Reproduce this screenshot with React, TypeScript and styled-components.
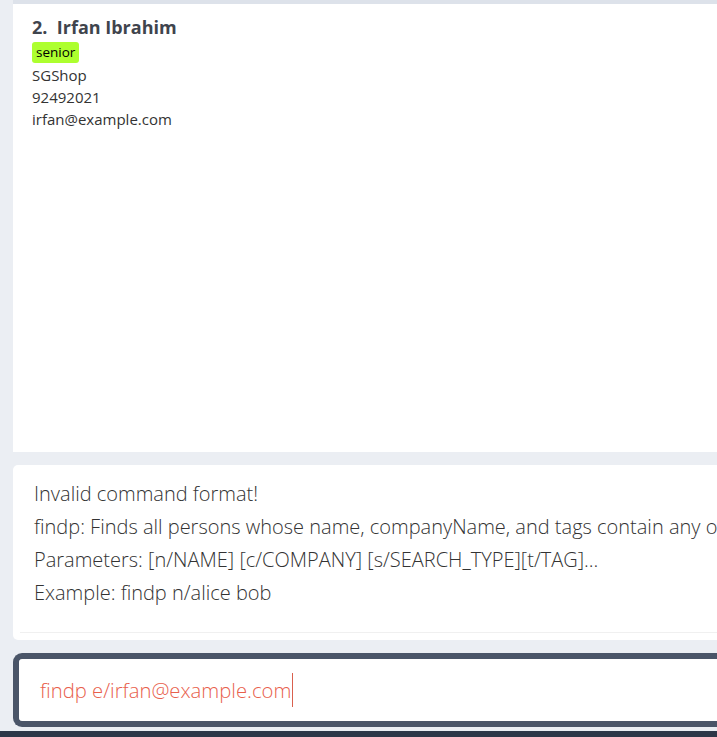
import styled, { createGlobalStyle } from "styled-components";

const GlobalStyle = createGlobalStyle`
  html, body {
    margin: 0;
    padding: 0;
    background: #ebeef3;
    overflow: hidden;
  }
  body {
    font-family: "Open Sans", "Noto Sans", sans-serif;
  }
`;

const Window = styled.div`
  width: 717px;
  height: 737px;
  display: flex;
  flex-direction: column;
  background: #ebeef3;
  overflow: hidden;
`;

const Main = styled.div`
  flex: 1;
  display: flex;
  flex-direction: column;
  gap: 13px;
  padding: 0 0 0 13px;
`;

const ListPanel = styled.div`
  height: 452px;
  border-top: 4px solid #dde2ea;
  background: #ffffff;
  padding: 12px 19px;
  box-sizing: border-box;
`;

const Card = styled.div`
  display: flex;
  flex-direction: column;
`;

const Name = styled.div`
  font-size: 18px;
  font-weight: 700;
  color: #3f444d;
  line-height: 22px;
  white-space: pre;
`;

const Tags = styled.div`
  display: flex;
  gap: 4px;
  margin: 4px 0 1px;
`;

const Tag = styled.span<{ $bg: string }>`
  background: ${(p) => p.$bg};
  color: #000;
  font-size: 13.5px;
  line-height: 21px;
  padding: 0 4px;
  border-radius: 3px;
`;

const Field = styled.div`
  font-size: 15px;
  line-height: 22px;
  color: #333;
`;

const ResultPanel = styled.div`
  height: 175px;
  background: #ffffff;
  border-radius: 5px 0 0 5px;
  padding: 12px 0 0 21px;
  box-sizing: border-box;
  display: flex;
  flex-direction: column;
  position: relative;
  overflow: hidden;
  &::after {
    content: "";
    position: absolute;
    left: 7px;
    right: 0;
    bottom: 7px;
    border-bottom: 1px solid #f0f0f0;
  }
`;

const ResultLine = styled.div`
  font-size: 20px;
  font-weight: 300;
  line-height: 33px;
  color: #333;
  white-space: nowrap;
`;

const CommandBox = styled.div`
  height: 74px;
  border: 6px solid #4a5568;
  border-right: none;
  border-radius: 9px 0 0 9px;
  background: #ffffff;
  box-sizing: border-box;
  display: flex;
  align-items: center;
  padding-left: 21px;
`;

const CommandText = styled.span`
  font-size: 20.3px;
  font-weight: 300;
  color: #e8604c;
  border-right: 1.5px solid #d9604e;
  line-height: 34px;
  padding-right: 1px;
`;

const BottomGap = styled.div`
  height: 4px;
`;

const StatusBar = styled.div`
  height: 6px;
  background: #2d3748;
`;

export default function App() {
  return (
    <Window>
      <GlobalStyle />
      <Main>
        <ListPanel>
          <Card>
            <Name>2.  Irfan Ibrahim</Name>
            <Tags>
              <Tag $bg="#adff2f">senior</Tag>
            </Tags>
            <Field>SGShop</Field>
            <Field>92492021</Field>
            <Field>irfan@example.com</Field>
          </Card>
        </ListPanel>
        <ResultPanel>
          <ResultLine>Invalid command format!</ResultLine>
          <ResultLine>
            findp: Finds all persons whose name, companyName, and tags contain any of the specified keywords
          </ResultLine>
          <ResultLine>Parameters: [n/NAME] [c/COMPANY] [s/SEARCH_TYPE][t/TAG]...</ResultLine>
          <ResultLine>Example: findp n/alice bob</ResultLine>
        </ResultPanel>
        <CommandBox>
          <CommandText>findp e/irfan@example.com</CommandText>
        </CommandBox>
      </Main>
      <BottomGap />
      <StatusBar />
    </Window>
  );
}
